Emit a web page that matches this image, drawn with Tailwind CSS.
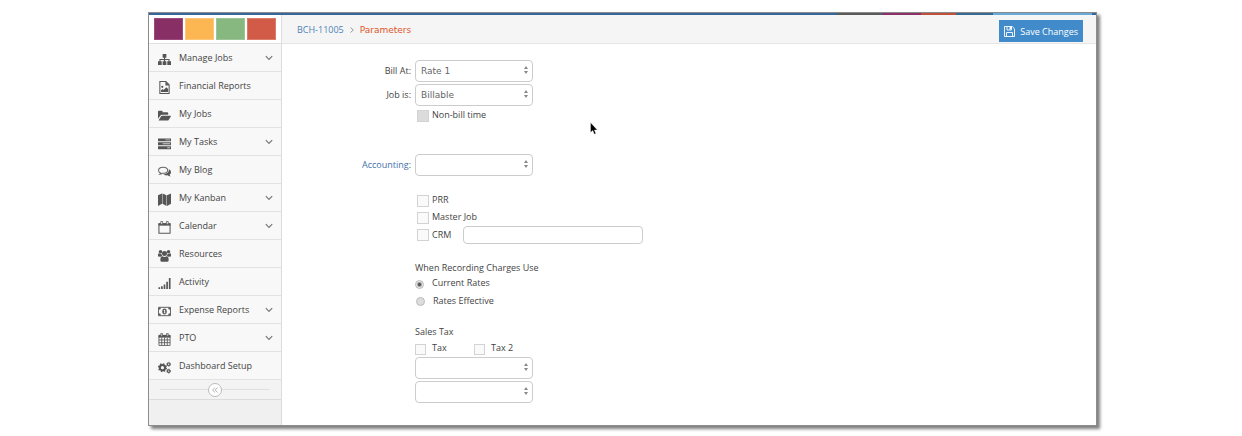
<!DOCTYPE html>
<html lang="en">
<head>
<meta charset="utf-8">
<title>BCH-11005 - Parameters</title>
<script src="https://cdn.jsdelivr.net/npm/@tailwindcss/browser@4"></script>
</head>
<body class="min-h-screen bg-white pt-3 pb-2 font-['Open_Sans',sans-serif] text-[9px] leading-[14px] text-[#444]">
<svg class="hidden">
  <symbol id="chev" viewBox="0 0 8 6"><path d="M.8 1.2 4 4.4 7.2 1.2" fill="none" stroke="#777" stroke-width="1.2"/></symbol>
  <symbol id="updown" viewBox="0 0 4 8"><path d="M2 0 4 3H0zM2 8 0 5h4z" fill="#888"/></symbol>
</svg>
<div class="relative mr-[145px] ml-[148px] border border-[#8c8c8c] bg-white shadow-[3px_3px_3px_0px_rgba(0,0,0,0.5)]">
  <div class="flex h-0.5 bg-[#35679b]">
    <div class="grow"></div>
    <div class="w-11 bg-[#5b5b5b]"></div>
    <div class="ml-px w-[39px] bg-[#8b3068]"></div>
    <div class="w-[35px] bg-[#c1503b]"></div>
    <div class="ml-px w-[35px] bg-[#336b93]"></div>
    <div class="ml-px w-[99px] bg-[#67aad8]"></div>
    <div class="w-1"></div>
  </div>
  <div class="flex">
    <aside class="w-[133px] shrink-0 border-r border-[#dcdcdc] bg-[#f0f0f0]">
      <div class="flex h-[29px] items-start gap-0.5 border-b border-[#e0e0e0] bg-white px-[5px] pt-[3px]">
        <div class="h-[22px] grow border border-[#9a4a7d] bg-[#882f65]"></div>
        <div class="h-[22px] grow border border-[#fcc77a] bg-[#fcb753]"></div>
        <div class="h-[22px] grow border border-[#9bc597] bg-[#87b880]"></div>
        <div class="h-[22px] grow border border-[#dc7b69] bg-[#d15b47]"></div>
      </div>
      <nav>
        <ul>
          <li><a href="#" class="flex h-7 items-center border-b border-[#e2e2e2] bg-[#f8f8f8] pr-2 pl-[9px]"><svg class="mt-[3px] mr-2 h-[13px] w-[13px]" viewBox="0 0 14 14" fill="#555"><path d="M5 1h4v4H7.6v1.400h4.800V9H14v4h-4V9h1.300V7.500H7.600V9H9v4H5V9h1.400V7.500H2.700V9H4v4H0V9h1.600V6.400h4.800V5H5z"/></svg><span class="grow">Manage Jobs</span><svg class="h-1.5 w-2"><use href="#chev"/></svg></a></li>
          <li><a href="#" class="flex h-7 items-center border-b border-[#e2e2e2] bg-[#f8f8f8] pr-2 pl-[9px]"><svg class="mt-[3px] mr-2 h-[13px] w-[13px]" viewBox="0 0 14 14" fill="#555"><path d="M2 .6h6.500L12 4.100v9.300H2z" fill="none" stroke="#555" stroke-width="1.1"/><path d="M8 .8v4h4L8 .8zM3.300 11.800V10l1.600-1.500L6 9.600l3-3 1.900 2v3.200z"/><circle cx="4.600" cy="6.300" r="1.200"/></svg><span class="grow">Financial Reports</span></a></li>
          <li><a href="#" class="flex h-7 items-center border-b border-[#e2e2e2] bg-[#f8f8f8] pr-2 pl-[9px]"><svg class="mt-[3px] mr-2 h-[13px] w-[13px]" viewBox="0 0 14 14" fill="#555"><path d="M0 10.500V3q0-1 1-1h3q1 0 1 1v.5h5q1 0 1 1V6.200H4.300q-1 0-1.700.8zM.6 12.500l2.600-4.500Q3.600 7.200 4.600 7.200h8.700q1 0 .5.800L11.500 11.800q-.5.700-1.500.700z"/></svg><span class="grow">My Jobs</span></a></li>
          <li><a href="#" class="flex h-7 items-center border-b border-[#e2e2e2] bg-[#f8f8f8] pr-2 pl-[9px]"><svg class="mt-[3px] mr-2 h-[13px] w-[13px]" viewBox="0 0 14 14" fill="#555"><path d="M0 1.500h14v3.200H0zM0 5.700h14v3.200H0zM0 9.900h14v3.200H0z"/><path d="M8 2.600h5v1H8zM5 6.800h8v1H5zM10 11h3v1h-3z" fill="#ccc"/></svg><span class="grow">My Tasks</span><svg class="h-1.5 w-2"><use href="#chev"/></svg></a></li>
          <li><a href="#" class="flex h-7 items-center border-b border-[#e2e2e2] bg-[#f8f8f8] pr-2 pl-[9px]"><svg class="mt-[3px] mr-2 h-[13px] w-[13px]" viewBox="0 0 14 14" fill="#555"><path d="M11.500 4.700c3.300 1.300 3 4.300 1 5.600.1 1 .6 1.400 1 2-1.300 0-2.200-.5-3-1.200-2 .3-3.800-.1-5-1.100 4 .1 6.800-2.200 6-5.300z"/><path d="M5.500 2.500C2.700 2.500 .6 4 .6 5.800c0 1.200.8 2.200 2.100 2.800-.1.600-.5 1-.9 1.400 1-.1 1.900-.5 2.500-1.100 3.700.5 6.100-1.100 6.100-3.100C10.400 4 8.300 2.500 5.500 2.500z" fill="#f8f8f8" stroke="#666" stroke-width="1.100"/></svg><span class="grow">My Blog</span></a></li>
          <li><a href="#" class="flex h-7 items-center border-b border-[#e2e2e2] bg-[#f8f8f8] pr-2 pl-[9px]"><svg class="mt-[3px] mr-2 h-[13px] w-[13px]" viewBox="0 0 14 14" fill="#555"><path d="M0 2.500 4.300.5v11.200L0 14zM4.800.5l4.400 2V14l-4.400-2.300zM9.700 2.500 14 .5v11.200L9.700 14z"/></svg><span class="grow">My Kanban</span><svg class="h-1.5 w-2"><use href="#chev"/></svg></a></li>
          <li><a href="#" class="flex h-7 items-center border-b border-[#e2e2e2] bg-[#f8f8f8] pr-2 pl-[9px]"><svg class="mt-[3px] mr-2 h-[13px] w-[13px]" viewBox="0 0 14 14" fill="#555"><path d="M1 3h12v10.300H1z" fill="none" stroke="#555" stroke-width="1.100"/><path d="M.6 2.500h12.800v2.500H.6z"/><path d="M3 .5h2v3H3zM9 .5h2v3H9z" fill="#f8f8f8" stroke="#555" stroke-width=".8"/></svg><span class="grow">Calendar</span><svg class="h-1.5 w-2"><use href="#chev"/></svg></a></li>
          <li><a href="#" class="flex h-7 items-center border-b border-[#e2e2e2] bg-[#f8f8f8] pr-2 pl-[9px]"><svg class="mt-[3px] mr-2 h-[13px] w-[13px]" viewBox="0 0 14 14" fill="#555"><circle cx="2.700" cy="2.900" r="1.900"/><circle cx="11.300" cy="2.900" r="1.900"/><circle cx="7" cy="4.900" r="2.700"/><path d="M0 8V6.200q0-1.500 1.200-1.500Q2.500 5.500 3.700 5.200q.1 1.500 1 2.200-1 .1-1.700.9zM14 8V6.200q0-1.500-1.200-1.500-1.300.8-2.500.5-.1 1.500-1 2.200 1 .1 1.700.9zM2.500 12q0-4.100 2.200-4.100 2.300 1.300 4.600 0 2.200 0 2.200 4.100 0 1.800-1.800 1.800h-5.400q-1.800 0-1.800-1.800z"/></svg><span class="grow">Resources</span></a></li>
          <li><a href="#" class="flex h-7 items-center border-b border-[#e2e2e2] bg-[#f8f8f8] pr-2 pl-[9px]"><svg class="mt-[3px] mr-2 h-[13px] w-[13px]" viewBox="0 0 14 14" fill="#555"><path d="M.5 11h1.800v2H.5zM3.300 10h1.800v3H3.300zM6.100 8h1.800v5H6.100zM8.900 5h1.800v8H8.900zM11.700 1h1.800v12h-1.800z"/></svg><span class="grow">Activity</span></a></li>
          <li><a href="#" class="flex h-7 items-center border-b border-[#e2e2e2] bg-[#f8f8f8] pr-2 pl-[9px]"><svg class="mt-[3px] mr-2 h-[13px] w-[13px]" viewBox="0 0 14 14" fill="#555"><path d="M.5 2.500h13v9H.5z" fill="none" stroke="#555"/><path d="M1 3h2.200Q3 5 1 5.200zM13 3h-2.200q.2 2 2.200 2.200zM1 11h2.200Q3 9 1 8.800zM13 11h-2.200q.2-2 2.200-2.200z"/><ellipse cx="7" cy="7" rx="2.400" ry="3.200"/><path d="M6 5.800 7.100 5h.6v3.300h.6V9H6v-.7h.7V6.100L6.300 6.400z" fill="#f8f8f8"/></svg><span class="grow">Expense Reports</span><svg class="h-1.5 w-2"><use href="#chev"/></svg></a></li>
          <li><a href="#" class="flex h-7 items-center border-b border-[#e2e2e2] bg-[#f8f8f8] pr-2 pl-[9px]"><svg class="mt-[3px] mr-2 h-[13px] w-[13px]" viewBox="0 0 14 14" fill="#555"><path d="M1 3h12v10.400H1zM1 7.500h12M1 10.400h12M4 5v8.400M7 5v8.400M10 5v8.400" fill="none" stroke="#555" stroke-width=".9"/><path d="M.6 2h12.800v3H.6z"/><path d="M3 .4h1.800v3H3zM9.200.4H11v3H9.200z" fill="#ccc" stroke="#555" stroke-width=".7"/></svg><span class="grow">PTO</span><svg class="h-1.5 w-2"><use href="#chev"/></svg></a></li>
          <li><a href="#" class="flex h-7 items-center border-b border-[#e2e2e2] bg-[#f8f8f8] pr-2 pl-[9px]"><svg class="mt-[3px] mr-2 h-[13px] w-[13px]" viewBox="0 0 14 14" fill="none" stroke="#555"><circle cx="4.800" cy="7.200" r="2.800" stroke-width="2.200"/><circle cx="4.800" cy="7.200" r="4.200" stroke-width="1.400" stroke-dasharray="1.650"/><circle cx="11.500" cy="3.500" r="1.400" stroke-width="1.200"/><circle cx="11.500" cy="3.500" r="2.200" stroke-width=".9" stroke-dasharray="1.150"/><circle cx="11.500" cy="10.900" r="1.400" stroke-width="1.200"/><circle cx="11.500" cy="10.900" r="2.200" stroke-width=".9" stroke-dasharray="1.150"/></svg><span class="grow">Dashboard Setup</span></a></li>
        </ul>
      </nav>
      <div class="flex h-5 items-center border-b border-[#dcdcdc] bg-[#f3f3f3] px-[11px]">
        <div class="h-px grow bg-[#e0e0e0]"></div>
        <button type="button" aria-label="Collapse sidebar" class="flex h-3.5 w-3.5 items-center justify-center rounded-full border border-[#bbb] bg-white"><svg class="h-1.5 w-1.5" viewBox="0 0 6 6"><path d="M2.900.5.600 3l2.300 2.500M5.500.5 3.200 3l2.300 2.500" fill="none" stroke="#aaa" stroke-width=".9"/></svg></button>
        <div class="h-px grow bg-[#e0e0e0]"></div>
      </div>
    </aside>
    <main class="grow">
      <header class="flex h-[29px] items-center justify-between border-b border-[#e5e5e5] bg-[#f5f5f5] pr-[13px] pl-[15px]">
        <div class="flex items-center gap-1.5 pt-0.5"><a href="#" class="text-[#4c83b8]">BCH-11005</a><svg class="h-1.5 w-1" viewBox="0 0 4 6"><path d="M.5.500 3.300 3 .5 5.500" fill="none" stroke="#999"/></svg><span class="font-['DejaVu_Sans',sans-serif] text-[#e0562c]">Parameters</span></div>
        <button type="button" class="mt-1 flex h-[22px] items-center gap-[5px] bg-[#428bca] px-[5px] text-white"><svg class="h-[11px] w-[11px]" viewBox="0 0 11 11" fill="none" stroke="#fff"><path d="M.5.500h7.700l2.300 2.300v7.700H.5zM2.500 10.500V6.500h6v4M3 .5v3.500h4.500V.5" stroke-width=".9"/><path d="M5.500 1h1.500v2.500H5.500z" fill="#fff" stroke="none"/></svg><span class="pt-px">Save Changes</span></button>
      </header>
      <form class="grid grid-cols-[129px_1fr] gap-x-1 pt-4 pb-[22px]">
        <label for="bill" class="pt-1 text-right">Bill At:</label>
        <div class="relative w-[118px]"><select id="bill" class="block h-[22px] w-full appearance-none rounded border border-[#ccc] bg-white pl-[5px] font-['DejaVu_Sans',sans-serif] text-[#666]"><option>Rate 1</option></select><svg class="pointer-events-none absolute top-[6px] right-[5px] h-2 w-1"><use href="#updown"/></svg></div>
        <label for="job" class="pt-1.5 text-right">Job is:</label>
        <div class="relative mt-0.5 w-[118px]"><select id="job" class="block h-[22px] w-full appearance-none rounded border border-[#ccc] bg-white pl-[5px] font-['DejaVu_Sans',sans-serif] text-[#666]"><option>Billable</option></select><svg class="pointer-events-none absolute top-[6px] right-[5px] h-2 w-1"><use href="#updown"/></svg></div>
        <div class="col-start-2 flex h-[18px] items-center gap-[3px] pl-0.5"><input id="nonbill" type="checkbox" disabled class="mt-0.5 h-3 w-3 appearance-none border border-[#d3d3d3] bg-[#dcdcdc]"><label for="nonbill">Non-bill time</label></div>
        <a href="#" class="pt-[34px] text-right text-[#3f71ab]">Accounting<span class="text-[#555]">:</span></a>
        <div class="relative mt-[30px] w-[118px]"><select aria-label="Accounting" class="block h-[22px] w-full appearance-none rounded border border-[#ccc] bg-white pl-[5px]"><option></option></select><svg class="pointer-events-none absolute top-[6px] right-[5px] h-2 w-1"><use href="#updown"/></svg></div>
        <div class="col-start-2 pt-[15px]">
          <div class="flex h-[17px] items-center gap-[3px] pl-0.5"><input id="prr" type="checkbox" class="mt-0.5 h-3 w-3 appearance-none border border-[#d3d3d3] bg-[#fafafa]"><label for="prr">PRR</label></div>
          <div class="flex h-[17px] items-center gap-[3px] pl-0.5"><input id="master" type="checkbox" class="mt-0.5 h-3 w-3 appearance-none border border-[#d3d3d3] bg-[#fafafa]"><label for="master">Master Job</label></div>
          <div class="mt-px flex h-[18px] items-center gap-[3px] pl-0.5"><input id="crm" type="checkbox" class="h-3 w-3 appearance-none border border-[#d3d3d3] bg-[#fafafa]"><label for="crm" class="w-7">CRM</label><input type="text" aria-label="CRM value" class="h-[18px] w-[180px] rounded-sm border border-[#ccc] bg-white px-1"></div>
        </div>
        <fieldset class="col-start-2 pt-[17px]">
          <legend class="float-left w-full">When Recording Charges Use</legend>
          <div class="clear-both flex h-4 items-center gap-2"><input id="cur" type="radio" name="rates" checked class="mt-0.5 h-[9px] w-[9px] appearance-none rounded-full border border-[#bbb] bg-[#eee] checked:bg-[radial-gradient(circle,#555_0_1px,#e8e8e8_3px)]"><label for="cur">Current Rates</label></div>
          <div class="mt-px flex h-[17px] items-center gap-2 pl-px"><input id="eff" type="radio" name="rates" class="mt-0.5 h-[9px] w-[9px] appearance-none rounded-full border border-[#bbb] bg-[#ddd] checked:bg-[#444]"><label for="eff">Rates Effective</label></div>
        </fieldset>
        <fieldset class="col-start-2 pt-4">
          <legend class="float-left w-full">Sales Tax</legend>
          <div class="clear-both flex h-[18px] items-center"><input id="tax" type="checkbox" class="mt-0.5 h-[11px] w-[11px] appearance-none border border-[#d3d3d3] bg-[#fafafa]"><label for="tax" class="ml-1.5 w-[42px]">Tax</label><input id="tax2" type="checkbox" class="mt-0.5 h-[11px] w-[11px] appearance-none border border-[#d3d3d3] bg-[#fafafa]"><label for="tax2" class="ml-1.5">Tax 2</label></div>
          <div class="relative w-[118px]"><select aria-label="Tax rate" class="block h-[22px] w-full appearance-none rounded border border-[#ccc] bg-white pl-[5px]"><option></option></select><svg class="pointer-events-none absolute top-[6px] right-[5px] h-2 w-1"><use href="#updown"/></svg></div>
          <div class="relative mt-0.5 w-[118px]"><select aria-label="Tax 2 rate" class="block h-[22px] w-full appearance-none rounded border border-[#ccc] bg-white pl-[5px]"><option></option></select><svg class="pointer-events-none absolute top-[6px] right-[5px] h-2 w-1"><use href="#updown"/></svg></div>
        </fieldset>
      </form>
    </main>
  </div>
  <svg class="pointer-events-none absolute top-[109px] left-[441px] h-[13px] w-2" viewBox="0 0 8 13"><path d="M.5.500v10l2.300-2 1.500 3.700 1.600-.7-1.500-3.500h3z" fill="#000" stroke="#fff" stroke-width=".4"/></svg>
</div>
</body>
</html>
